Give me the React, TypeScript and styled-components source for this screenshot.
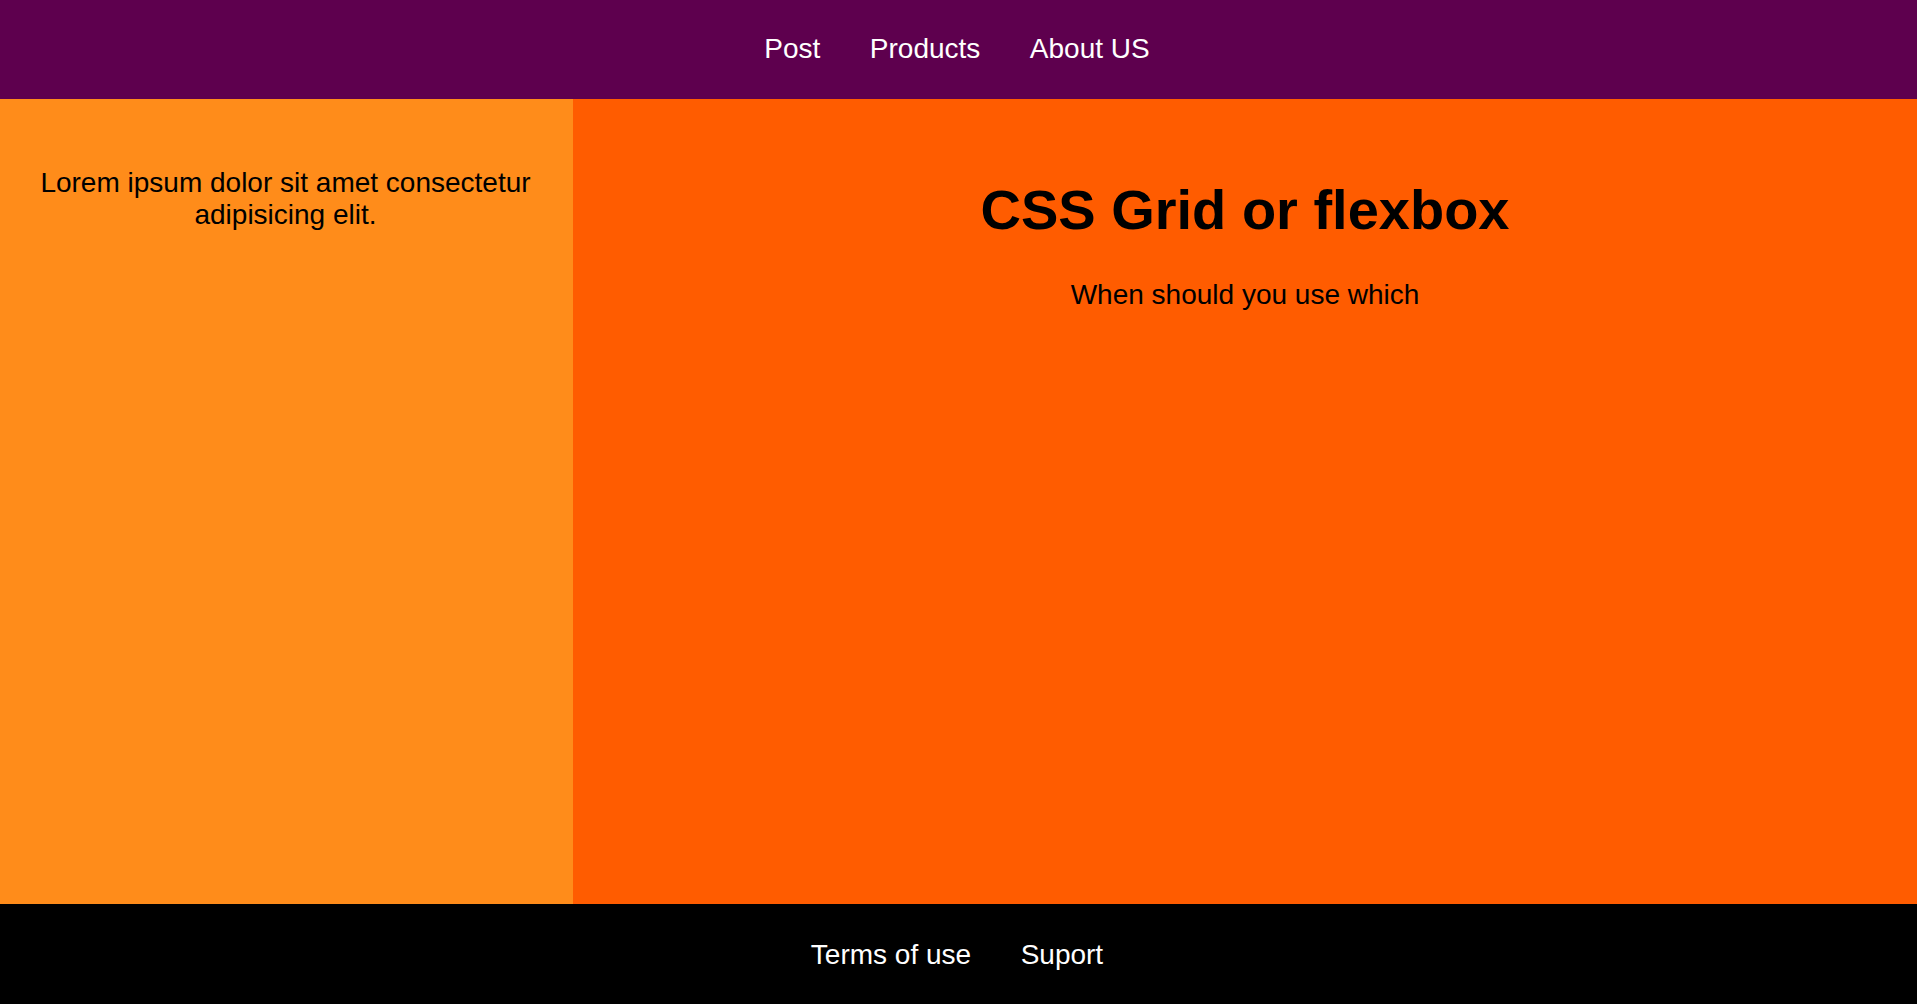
import styled, { createGlobalStyle } from "styled-components";

const GlobalStyle = createGlobalStyle`
  * {
    box-sizing: border-box;
  }
  body {
    margin: 0;
    font-family: "Liberation Sans", Arial, sans-serif;
    font-size: 28px;
  }
`;

const Page = styled.div`
  display: grid;
  grid-template-rows: 99px 1fr 100px;
  min-height: 100vh;
`;

const Bar = styled.div<{ $bg: string; $shift: number }>`
  display: flex;
  align-items: center;
  justify-content: center;
  background-color: ${(p) => p.$bg};
  padding-right: 3px;
  padding-top: ${(p) => (p.$shift > 0 ? p.$shift : 0)}px;
  padding-bottom: ${(p) => (p.$shift < 0 ? -p.$shift : 0)}px;
`;

const Nav = styled.nav`
  display: flex;
  gap: 49.5px;
`;

const NavLink = styled.a`
  color: #fff;
  text-decoration: none;
  line-height: normal;
`;

const Main = styled.div`
  display: grid;
  grid-template-columns: 573px 1fr;
`;

const Aside = styled.aside`
  background-color: #ff8c1a;
  padding: 40px 41px 40px 39px;
  text-align: center;
  p {
    margin: 28px 0;
  }
`;

const Content = styled.section`
  background-color: #ff5c00;
  padding: 40px 0;
  text-align: center;
  h1 {
    font-size: 56px;
    margin: 37.5px 0;
  }
  p {
    margin: 28px 0;
  }
`;

export default function App() {
  return (
    <>
      <GlobalStyle />
      <Page>
        <Bar as="header" $bg="#5e004e" $shift={-2}>
          <Nav>
            <NavLink href="#">Post</NavLink>
            <NavLink href="#">Products</NavLink>
            <NavLink href="#">About US</NavLink>
          </Nav>
        </Bar>
        <Main>
          <Aside>
            <p>Lorem ipsum dolor sit amet consectetur adipisicing elit.</p>
          </Aside>
          <Content>
            <h1>CSS Grid or flexbox</h1>
            <p>When should you use which</p>
          </Content>
        </Main>
        <Bar as="footer" $bg="#000" $shift={2}>
          <Nav>
            <NavLink href="#">Terms of use</NavLink>
            <NavLink href="#">Suport</NavLink>
          </Nav>
        </Bar>
      </Page>
    </>
  );
}
